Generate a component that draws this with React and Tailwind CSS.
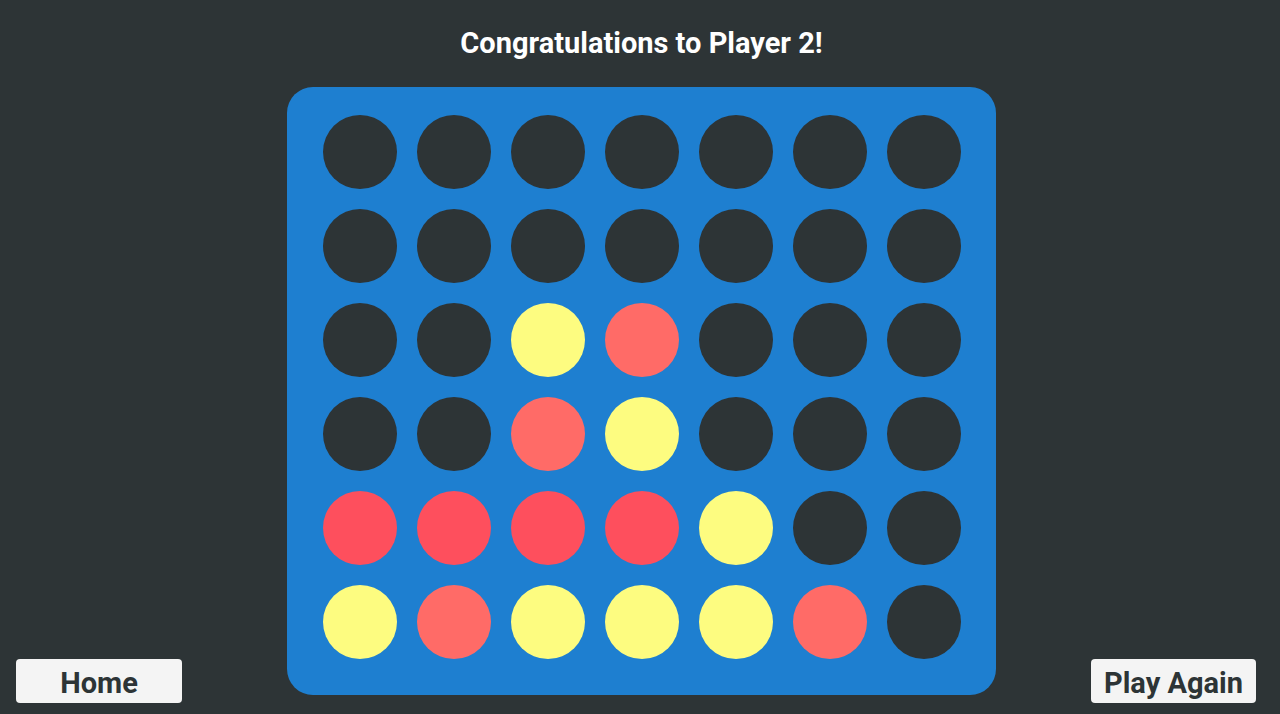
const BOARD = [
  "DDDDDDD",
  "DDDDDDD",
  "DDYRDDD",
  "DDRYDDD",
  "WWWWYDD",
  "YRYYYRD",
];

const DISC = {
  D: "bg-[#2d3436]",
  Y: "bg-[#fdfc80]",
  R: "bg-[#ff6b67]",
  W: "bg-[#fe4f5d]",
};

export default function App() {
  return (
    <div className="h-[714px] bg-[#2d3436] px-4 flex flex-col font-['Roboto',sans-serif] overflow-hidden">
      {/* title */}
      <h1 className="pt-[27px] pl-[3px] text-center text-[29px] leading-8 font-bold text-white">
        Congratulations to Player 2!
      </h1>

      {/* board + buttons */}
      <div className="mt-7 grid grid-cols-[1fr_auto_1fr] items-end">
        <button className="justify-self-start w-[166px] h-11 pt-[3px] rounded bg-[#f4f4f4] text-[29px] font-bold text-[#2d3436]">
          Home
        </button>

        <div className="mb-2 ml-[2px] w-[709px] rounded-[26px] bg-[#1e7fd0] pt-7 pb-9 pl-9 pr-[35px]">
          <div className="grid grid-cols-7 gap-5">
            {BOARD.map((row, r) =>
              row.split("").map((c, i) => (
                <div key={r + "-" + i} className={`w-[74px] h-[74px] rounded-full ${DISC[c]}`} />
              ))
            )}
          </div>
        </div>

        <button className="justify-self-end mr-2 w-[165px] h-11 pt-[3px] rounded bg-[#f4f4f4] text-[29px] font-bold text-[#2d3436]">
          Play Again
        </button>
      </div>
    </div>
  );
}
